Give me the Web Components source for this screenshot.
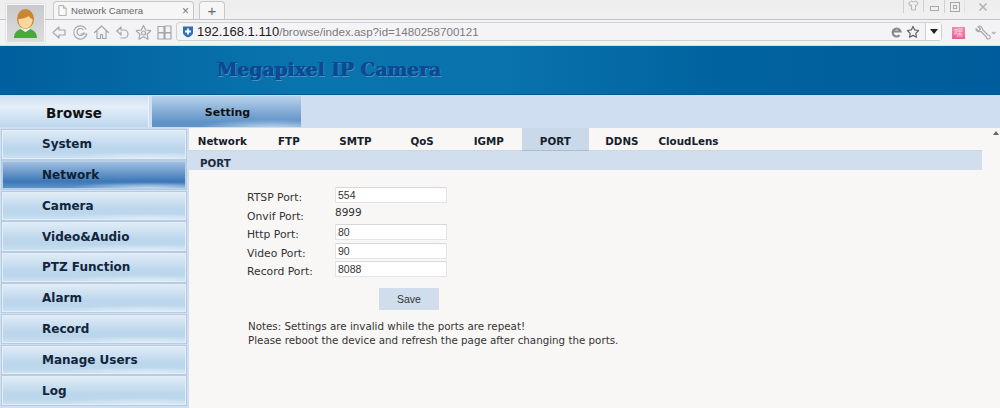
<!DOCTYPE html>
<html><head><meta charset="utf-8"><style>
html,body{margin:0;padding:0;background:#f8f7f6;overflow:hidden}
body{width:1000px;height:408px;font-family:"DejaVu Sans",sans-serif}
</style></head><body>
<browser-chrome></browser-chrome>
<cam-banner></cam-banner>
<top-nav></top-nav>
<main-area>
<side-menu slot="side"></side-menu>
<port-panel slot="main"></port-panel>
</main-area>
<script>
function def(name,html){customElements.define(name,class extends HTMLElement{constructor(){super();this.attachShadow({mode:'open'}).innerHTML=html;}})}
const ic=(d,w=19,extra='')=>`<svg width="${w}" height="${w}" viewBox="0 0 19 19" fill="none" stroke="#a3a8ae" stroke-width="1.2" stroke-linejoin="round" stroke-linecap="round" ${extra}>${d}</svg>`;
def('browser-chrome',`<style>
:host{display:block;height:45px;background:linear-gradient(#eeeeee,#f3f3f4);position:relative;box-sizing:border-box;color:#666}
.tabs{display:flex;height:19px;padding-left:53px;gap:5px;align-items:flex-end;position:relative}
.tab{box-sizing:border-box;height:18px;border:1px solid #c6c8cb;border-bottom:0;border-radius:4px 4px 0 0;background:#f6f6f7;display:flex;align-items:center}
.t1{width:141px;padding-left:4px;gap:4px;font:9.600px "Liberation Sans",sans-serif;color:#666}
.t1 .x{margin-left:auto;margin-right:4px;font-size:12px;color:#777}
.t2{width:26px;justify-content:center;font:15px "Liberation Sans",sans-serif;color:#666}
.win{position:absolute;left:903px;top:0;display:flex;align-items:flex-start;height:14px}
.win span{display:flex;justify-content:center;height:13px;border-left:1px solid #d0d0d2;box-sizing:content-box}
.win span:nth-child(1){width:19px}
.win span:nth-child(2){width:20px}
.win span:nth-child(3){width:19px}
.win span:last-child{border-left:1px solid #e2e2e3;width:33px;padding-left:1px}
.bar{position:absolute;left:0;right:0;top:19px;height:26px;display:flex;align-items:center;border-top:1px solid #c0c2c5;box-sizing:border-box;background:#f3f3f5;padding-left:50px}
.nav{display:flex;gap:2px;align-items:center}
.nav svg{display:block}
.url{margin-left:2px;width:766px;height:19px;box-sizing:border-box;border:1px solid #cfd0d3;border-radius:3px;background:#f4f4f7;display:flex;align-items:center;padding-left:5px;font:11.600px "Liberation Sans",sans-serif;color:#7b7b7b;position:relative;top:-1px}
.url b{font-weight:400;color:#1c1c1c;font-size:13px}
.shield{margin-right:3px;flex:none}
.urlr{margin-left:auto;display:flex;align-items:center;gap:3px}
.drop{width:15px;height:17px;border-left:1px solid #cfd0d3;background:#fafafa;display:flex;align-items:center;justify-content:center;margin-left:2px}
.drop i{border:4px solid transparent;border-top:5px solid #222;border-bottom:0}
.pink{margin-left:10px;width:13px;height:12px;background:linear-gradient(#ee8fb0,#ec5f92);display:flex;align-items:center;justify-content:center;font:9px "Noto Sans CJK SC",sans-serif;color:#fbd5e2;overflow:hidden;line-height:12px}
.wr{margin-left:9px}
.avatar{position:absolute;left:6px;top:4px;width:39px;height:39px;box-sizing:border-box;background:linear-gradient(#c9cacc,#dcdcdd);border:1px solid #f5f5f5;box-shadow:0 0 1px #aaa}
</style>
<div class="tabs">
<div class="tab t1"><svg width="9" height="11" viewBox="0 0 10 12" fill="#fafafa" stroke="#a9a9a9"><path d="M1 .5h5l3 3v8H1zM6 .5v3h3"/></svg><span>Network Camera</span><span class="x">×</span></div>
<div class="tab t2">+</div>
</div>
<div class="win">
<span>${ic('<path d="M3 4l4-2.500 2.500 1.500L12 1.500 16 4l-1.500 4-2 -.5v7h-6v-7l-2 .5z"/>',13)}</span>
<span style="align-items:flex-end;padding-bottom:1px;height:11px"><svg width="9" height="5"><rect x=".5" y=".5" width="8" height="4" fill="none" stroke="#aaa"/></svg></span>
<span style="padding-top:2px;height:11px"><svg width="10" height="10" fill="none" stroke="#aaa"><rect x=".5" y=".5" width="9" height="9"/><rect x="3.500" y="3.500" width="3" height="3"/></svg></span>
<span style="padding-top:2px;height:11px"><svg width="10" height="10" fill="none" stroke="#b5b5b5" stroke-width="1.600"><path d="M1.500 1.500l7 7M8.500 1.500l-7 7"/></svg></span>
</div>
<div class="bar">
<div class="nav">
${ic('<path d="M9 4L3 9.500 9 15v-3h6V7H9z"/>')}
${ic('<path d="M15 6a6.600 6.600 0 1 0 .8 5H10"/><path d="M13 9.500a3.500 3.500 0 1 1-1-3"/>',19)}
${ic('<path d="M2.500 9.500L9.500 3l7 6.500M5 8v7.500h3.500v-4h2v4H14V8"/>')}
${ic('<path d="M4 8l4-4 0 3h3a4 4 0 0 1 0 8H8"/><path d="M4 8l4 4V9"/>')}
${ic('<path d="M9.500 2.500l2.200 4.500 5 .7-3.600 3.500.9 5-4.500-2.400L5 16.200l.9-5L2.300 7.700l5-.7z"/><circle cx="9.500" cy="10" r="2"/>')}
${ic('<path d="M3 3.500h6v6H3zM10 3h6v6.500h-6zM3 10h6v6H3zM10 10h6v6h-6z"/>')}
</div>
<div class="url">
<svg class="shield" width="12" height="13" viewBox="0 0 12 13"><path d="M1 1.500h10v6c0 2.500-3 4-5 5-2-1-5-2.500-5-5z" fill="#2f6fb5"/><path d="M6 3.500v6M3 6.500h6" stroke="#fff" stroke-width="1.800"/></svg>
<span><b>192.168.1.110</b>/browse/index.asp?id=1480258700121</span>
<div class="urlr">
<svg width="13" height="13" viewBox="0 0 13 13" fill="none" stroke="#85888b" stroke-width="2.200"><path d="M2.500 6.500h8A4 4 0 1 0 9.500 10.300"/></svg>
<svg width="14" height="14" viewBox="0 0 15 15" fill="none" stroke="#5f6265" stroke-width="1.300" stroke-linejoin="round"><path d="M7.500 1.500l1.800 3.800 4.200.6-3 3 .7 4.200-3.700-2-3.700 2 .7-4.200-3-3 4.200-.6z"/></svg>
<div class="drop"><i></i></div>
</div>
</div>
<div class="pink">嘿</div>
<svg class="wr" width="22" height="16" viewBox="0 0 22 16" fill="none" stroke="#a9abae" stroke-width="1.200" stroke-linejoin="round"><path d="M2 3.500L4.500 6 6.500 4 4 1.500C6 .5 8.500 2 8.500 4.500L14 10c1 0 1.500 0 2 1 .8 1.300-.2 3-1.700 3-1.300 0-2-1-2-2L7 6.500C4.500 7 1.500 6 2 3.500z"/><path d="M18 7l1.700 1.700L21.500 7"/></svg>
</div>
<div class="avatar"><svg width="37" height="37" viewBox="0 0 37 37">
<path d="M7 33c0-5 3-8 7-9l4.500 3 4.500-3c4 1 7 4 7 9z" fill="#4aa83c"/>
<path d="M14 24l4.500 3 4.500-3-1-2h-7z" fill="#eef3e8"/>
<ellipse cx="18.500" cy="14" rx="8.500" ry="10" fill="#c9852f"/>
<path d="M11.500 14c3 0 8-1 10-3 1 1.500 3 3 4 3 .5 5-3 9.500-7 9.500s-7.500-4.500-7-9.500z" fill="#fad79b"/>
</svg></div>`);
def('cam-banner',`<style>
:host{display:block;height:50px;background:linear-gradient(90deg,#005f9e 0%,#0a74ae 30%,#0a72ad 50%,#00639f 72%,#005c9c 100%);border-top:1px solid #d5dde8;box-sizing:border-box;border-bottom:1px solid #015a8f}
div{padding:11px 0 0 216.500px;font:700 18.700px "DejaVu Serif",serif;color:#0d4890;line-height:24px;text-shadow:.5px 0 0 #0d4890,1px 1px 0 #4a94c8;white-space:nowrap}
</style><div>Megapixel IP Camera</div>`);
def('top-nav',`<style>
:host{display:flex;height:33px;background:#cfdef0;box-sizing:border-box;padding-top:1px;font-family:"DejaVu Sans",sans-serif;font-weight:700;color:#111}
.b{width:149px;height:31px;background:linear-gradient(#cfe0f0,#e4eff8 35%,#bcd7ee);border-right:1px solid #e8eff7;display:flex;align-items:center;justify-content:center;font-size:13.500px;padding-top:2px;box-sizing:border-box}
.s{margin-left:3px;width:149px;height:31px;background:radial-gradient(ellipse 50% 30% at 80% 105%,#c5dcf0,transparent),linear-gradient(#b8d2ea,#5f92c8 85%);display:flex;align-items:center;justify-content:center;font-size:11px;padding:1px 0 0 2px;box-sizing:border-box}
</style><div class="b">Browse</div><div class="s">Setting</div>`);
def('main-area',`<style>
:host{display:flex;height:280px;background:#f8f7f6;overflow:hidden}
::slotted([slot=side]){flex:none}
::slotted([slot=main]){flex:1}
</style><slot name="side"></slot><slot name="main"></slot>`);
def('side-item',`<style>
:host{display:flex;align-items:center;box-sizing:border-box;height:28.500px;margin-bottom:2.300px;padding:0 0 0 39px;font:700 12px "DejaVu Sans",sans-serif;color:#12253b;border:1px solid #e2edf6;box-shadow:0 0 0 1px #b7cce2;background:radial-gradient(ellipse 45% 22% at 78% 100%,#dcebf7,transparent),linear-gradient(#dfebf6,#bcd6ec 60%,#bcd6ec 80%,#cbe0f1)}
:host([active]){background:radial-gradient(ellipse 45% 22% at 80% 100%,#c2dbf0,transparent),linear-gradient(#9fbfe0,#3d78b8 75%,#5e93c9);border-color:#b9cfe6;color:#0f1f33}
</style><slot></slot>`);
def('side-menu',`<style>:host{display:block;width:189px;padding:2px 3px 0 2px;box-sizing:border-box;background:#cfdef0}</style>
<side-item>System</side-item><side-item active>Network</side-item><side-item>Camera</side-item><side-item>Video&amp;Audio</side-item><side-item>PTZ Function</side-item><side-item>Alarm</side-item><side-item>Record</side-item><side-item>Manage Users</side-item><side-item>Log</side-item>`);
def('port-panel',`<style>
:host{display:block;position:relative;font-family:"DejaVu Sans",sans-serif;color:#333;padding-right:18px}
.tabs{display:flex;height:23px;font-weight:700;font-size:10.300px;color:#15202b;box-sizing:border-box;border-bottom:1px solid #c9d7e6;align-items:stretch}
.tabs span{display:flex;align-items:center;justify-content:center;height:22px;width:66.600px;flex:none;padding-top:4px;box-sizing:border-box}
.tabs .on{background:#c9d9ea;box-shadow:0 1px 0 #a9bcd0}
.title{background:#d0deee;font-weight:700;font-size:10.300px;color:#1c2a3c;padding:5px 0 0 11px;display:flex;align-items:center;height:14px}
form{display:grid;grid-template-columns:88px 112px;padding:18.500px 0 0 58px;font-size:10.800px;grid-auto-rows:18.500px;align-items:center;color:#333}
.in{width:112px;height:16px;box-sizing:border-box;background:#fff;border:1px solid #e4e4e4;border-top-color:#d8d8d8;font:10.500px "Liberation Sans",sans-serif;padding:0 0 0 2px;margin:0 0 5px;color:#333;outline:0}
.plain{font-size:10.500px;margin-bottom:9px}
.save{display:flex;align-items:center;justify-content:center;box-sizing:border-box;margin:6.500px 0 0 190px;width:60px;height:22px;background:#cfdded;font:10.500px "Liberation Sans",sans-serif;color:#333}
.notes{margin:9px 0 0 59px;font-size:10.300px;line-height:14px;color:#333;white-space:nowrap}
.sb{position:absolute;right:1px;top:3px;width:0;height:0;border:3.500px solid transparent;border-bottom:4px solid #666;border-top:0}
</style>
<div class="tabs">
<span>Network</span><span>FTP</span><span>SMTP</span><span>QoS</span><span>IGMP</span><span class="on">PORT</span><span>DDNS</span><span>CloudLens</span>
</div>
<div class="title">PORT</div>
<form>
<label>RTSP Port:</label><input class="in" value="554">
<label>Onvif Port:</label><span class="plain">8999</span>
<label>Http Port:</label><input class="in" value="80">
<label>Video Port:</label><input class="in" value="90">
<label>Record Port:</label><input class="in" value="8088">
</form>
<div class="save">Save</div>
<div class="notes">Notes: Settings are invalid while the ports are repeat!<br>Please reboot the device and refresh the page after changing the ports.</div>
<div class="sb"></div>`);
</script>
</body></html>
